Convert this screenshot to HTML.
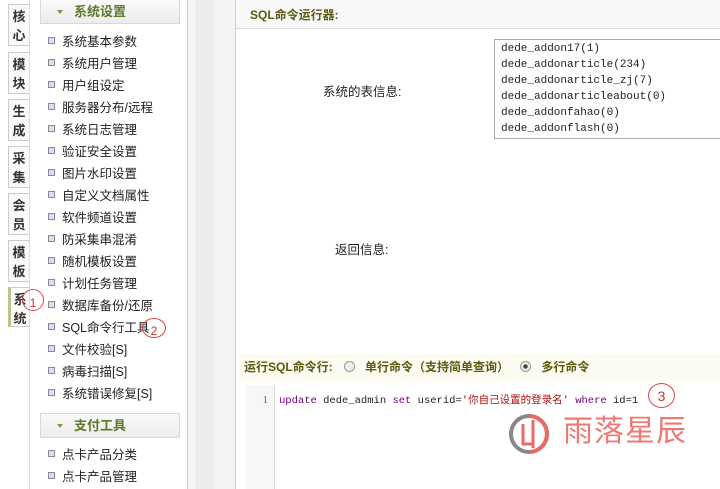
<!DOCTYPE html>
<html><head><meta charset="utf-8"><style>
*{margin:0;padding:0;box-sizing:border-box}
body{width:720px;height:489px;overflow:hidden;background:#fff;font-family:"Liberation Sans","Noto Sans CJK SC",sans-serif;font-size:12px;color:#222;position:relative}
.abs{position:absolute}
.tab{position:absolute;left:8px;width:21px;height:42px;background:#fafafa;border:1px solid #ccc;border-right:none;font-weight:bold;font-size:13px;line-height:19px;text-align:center;padding-top:2px;color:#333}
.side{left:29px;top:0;width:159px;height:489px;background:#fff;border-right:1px solid #ccc;border-left:1px solid #ddd}
.hd{position:absolute;left:40px;width:140px;height:25px;border:1px solid #d8d8d8;background:linear-gradient(#fafafa,#ececec);color:#5a7a2a;font-weight:bold;font-size:13px;line-height:23px;padding-left:33px}
.hd:before{content:"";position:absolute;left:16px;top:10px;border:3px solid transparent;border-top:4px solid #7a9a4a}
.it{position:absolute;left:48px;font-size:12.5px;line-height:16px;color:#222}
.it:before{content:"";display:inline-block;width:5px;height:5px;border:1px solid #889;background:#dde;margin-right:7px;vertical-align:2px}
.circ{position:absolute;border:1px solid #d44;border-radius:50%;color:#c33;font-size:12px;text-align:center}
</style></head><body>
<div class="tab" style="top:4px">核<br>心</div>
<div class="tab" style="top:52px">模<br>块</div>
<div class="tab" style="top:99px">生<br>成</div>
<div class="tab" style="top:146px">采<br>集</div>
<div class="tab" style="top:193px">会<br>员</div>
<div class="tab" style="top:240px">模<br>板</div>
<div class="tab" style="top:287px;height:40px;border-left:3px solid #b8c888;background:#fff">系<br>统</div>
<div class="abs side"></div>
<div class="hd" style="top:-1px">系统设置</div>
<div class="it" style="top:34px">系统基本参数</div>
<div class="it" style="top:56px">系统用户管理</div>
<div class="it" style="top:78px">用户组设定</div>
<div class="it" style="top:100px">服务器分布/远程</div>
<div class="it" style="top:122px">系统日志管理</div>
<div class="it" style="top:144px">验证安全设置</div>
<div class="it" style="top:166px">图片水印设置</div>
<div class="it" style="top:188px">自定义文档属性</div>
<div class="it" style="top:210px">软件频道设置</div>
<div class="it" style="top:232px">防采集串混淆</div>
<div class="it" style="top:254px">随机模板设置</div>
<div class="it" style="top:276px">计划任务管理</div>
<div class="it" style="top:298px">数据库备份/还原</div>
<div class="it" style="top:320px">SQL命令行工具</div>
<div class="it" style="top:342px">文件校验[S]</div>
<div class="it" style="top:364px">病毒扫描[S]</div>
<div class="it" style="top:386px">系统错误修复[S]</div>
<div class="hd" style="top:413px">支付工具</div>
<div class="it" style="top:447px">点卡产品分类</div>
<div class="it" style="top:469px">点卡产品管理</div>
<div class="circ" style="left:22px;top:289px;width:22px;height:22px;line-height:26px">1</div>
<div class="circ" style="left:142px;top:318px;width:24px;height:20px;line-height:24px">2</div>
<div class="abs" style="left:188px;top:0;width:47px;height:489px;background:#f4f4f4"></div>
<div class="abs" style="left:196px;top:0;width:18px;height:489px;background:#ececec;border-left:1px solid #e4e4e4"></div>
<div class="abs" style="left:235px;top:0;width:485px;height:489px;background:#fff;border-left:1px solid #ccc"></div>
<div class="abs" style="left:236px;top:0;width:484px;height:29px;background:#f8f8f8;border-bottom:1px solid #ddd;font-weight:bold;color:#5a5a10;font-size:12px;line-height:30px;padding-left:14px">SQL命令运行器:</div>
<div class="abs" style="left:323px;top:81px;font-size:12.5px">系统的表信息:</div>
<div class="abs" style="left:494px;top:39px;width:230px;height:100px;border:1px solid #aaa;background:#fff;font-family:'Liberation Mono',monospace;font-size:11px;line-height:16px;padding:1px 0 0 6px;overflow:hidden">dede_addon17(1)<br>dede_addonarticle(234)<br>dede_addonarticle_zj(7)<br>dede_addonarticleabout(0)<br>dede_addonfahao(0)<br>dede_addonflash(0)</div>
<div class="abs" style="left:335px;top:239px;font-size:12.5px">返回信息:</div>
<div class="abs" style="left:240px;top:354px;width:480px;height:27px;background:#fbfbf0;color:#5a5a10;font-weight:bold;font-size:12px;line-height:27px;padding-left:4px">运行SQL命令行: <span style="display:inline-block;width:11px;height:11px;border:1px solid #999;border-radius:50%;background:#eee;vertical-align:-1px;margin:0 10px 0 8px"></span>单行命令（支持简单查询） <span style="display:inline-block;width:11px;height:11px;border:1px solid #999;border-radius:50%;background:radial-gradient(#444 30%,#eee 40%);vertical-align:-1px;margin:0 10px 0 8px"></span>多行命令</div>
<div class="abs" style="left:245px;top:385px;width:30px;height:104px;background:#f7f7f7;border-right:1px solid #ddd;text-align:right;padding-right:6px;font-family:'Liberation Serif',serif;color:#666;font-size:11px;line-height:30px">1</div>
<div class="abs" style="left:279px;top:392px;font-family:'Liberation Mono','Noto Sans CJK SC',monospace;font-size:10.5px;color:#222;white-space:nowrap"><span style="color:#708">update</span> dede_admin <span style="color:#708">set</span> userid=<span style="color:#a11">'你自己设置的登录名'</span> <span style="color:#708">where</span> id=1</div>
<div class="circ" style="left:648px;top:383px;width:27px;height:25px;line-height:25px;font-size:14px">3</div>
<svg class="abs" style="left:505px;top:412px" width="60" height="44" viewBox="0 0 60 44"><circle cx="24" cy="22" r="18" fill="none" stroke="#888" stroke-width="4"/><path d="M24 4a18 18 0 0 1 0 36" fill="none" stroke="#e86a62" stroke-width="4"/><path d="M18 12v20h10M28 8v28" stroke="#e86a62" stroke-width="3" fill="none"/></svg>
<div class="abs" style="left:563px;top:414px;font-size:30px;color:#ec7a72;line-height:36px;letter-spacing:1px">雨落星辰</div>
</body></html>
